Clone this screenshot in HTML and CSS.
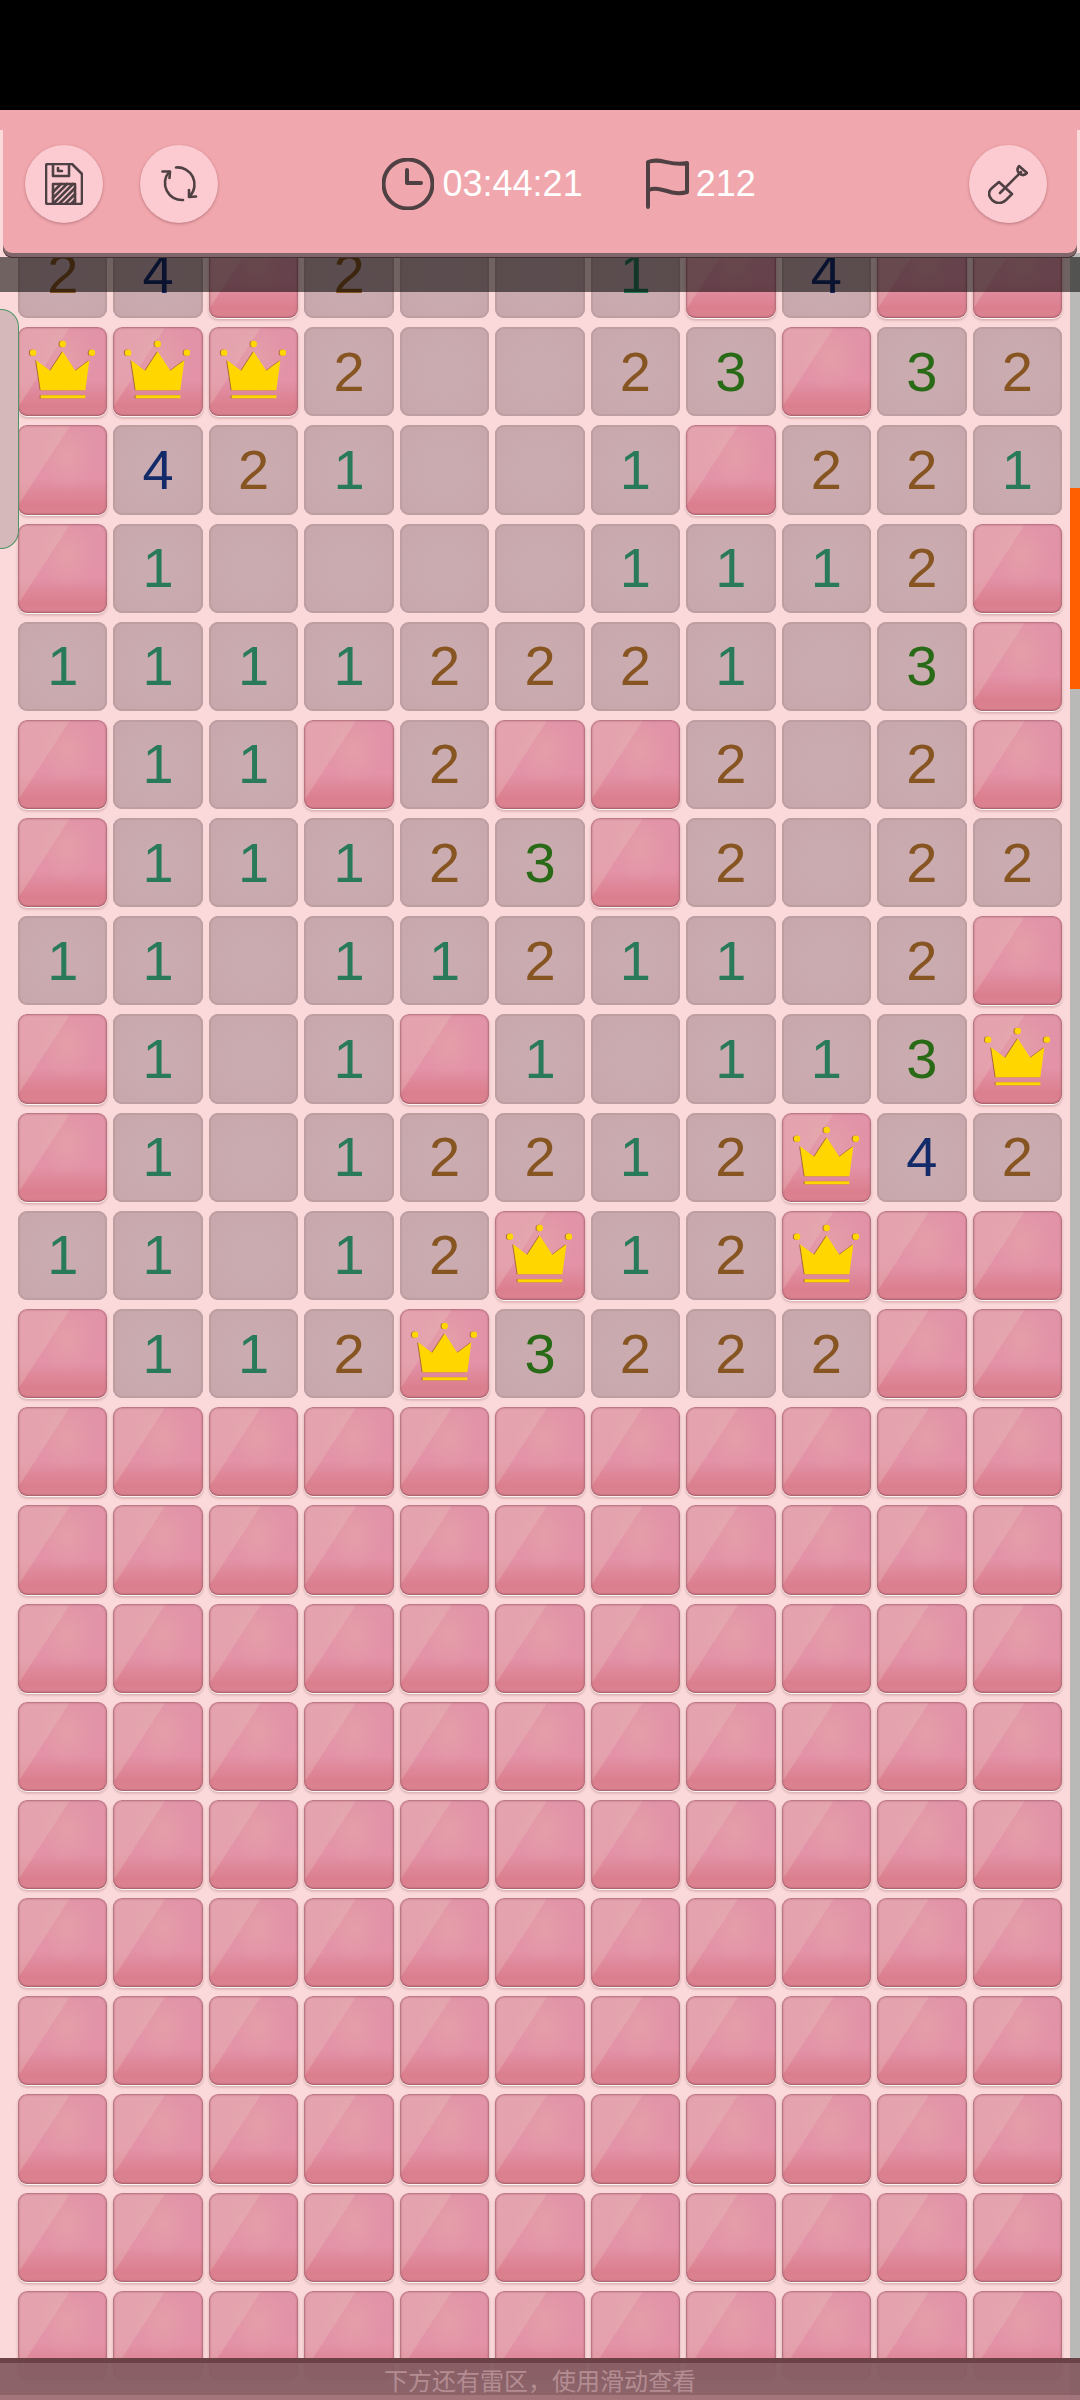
FILE: index.html
```
<!DOCTYPE html>
<html lang="zh">
<head>
    <meta charset="utf-8" />
    <meta name="viewport" content="width=device-width, initial-scale=1">
    <title>扫雷</title>
    <link rel="stylesheet" href="styles.css">
</head>
<body>
    <div class="status-bar"></div>
    <!-- 顶部工具栏 -->
    <header class="top">
        <div class="toolbar">
            <div class="tools">
                <button class="round" type="button" aria-label="保存">
                    <svg width="38" height="42" viewBox="0 0 38 42">
                        <path d="M3 1H27L37 11V39Q37 41 35 41H3Q1 41 1 39V3Q1 1 3 1Z"/>
                        <path d="M8 1V13H24V1M13 5V8H17"/>
                        <path d="M8 41V21H30V41"/>
                        <path d="M8 29L16 21M8 35L22 21M8 41L28 21M14 41L30 25M20 41L30 31M26 41L30 37"/>
                    </svg>
                </button>
                <button class="round" type="button" aria-label="重新开始">
                    <svg width="38" height="38" viewBox="0 0 38 38">
                        <path d="M16 2.5A17 17 0 0 1 30 31M23 35A17 17 0 0 1 9 7"/>
                        <path d="M2.5 6.5H10L9.5 13M29 25V32L36 31.5"/>
                    </svg>
                </button>
            </div>
            <div class="stat time">
                <svg width="52" height="52" viewBox="0 0 52 52">
                    <circle cx="26" cy="26" r="24.5"/>
                    <path d="M25 12V25H39"/>
                </svg>
                <span>03:44:21</span>
            </div>
            <div class="stat">
                <svg width="44" height="52" viewBox="0 0 44 52">
                    <path d="M3 49V4C16 -1 26 9 42 5V34C26 39 18 27 3 32"/>
                </svg>
                <span>212</span>
            </div>
            <button class="round dig" type="button" aria-label="挖开">
                <svg width="40" height="40" viewBox="0 0 40 40">
                    <path d="M11 18L24 30L18 36Q11 42 4 36Q-2 29 4 24ZM12 29L33 8M31 2L39 9Q35 13 31 9Q28 6 31 2Z"/>
                </svg>
            </button>
        </div>
    </header>

    <!-- 雷区 -->
    <main class="field">
        <div class="board" id="board"></div>
        <div class="track"><div class="thumb"></div></div>
        <div class="shade"></div>
        <div class="drawer"></div>
        <div class="tip">下方还有雷区，使用滑动查看</div>
    </main>

    <script type="text/javascript">
        // x 未翻开  * 皇冠标记  . 空白
        var rows = [
            '24x2..1x4xx',
            '***2..23x32',
            'x421..1x221',
            'x1....1112x',
            '11112221.3x',
            'x11x2xx2.2x',
            'x11123x2.22',
            '11.11211.2x',
            'x1.1x1.113*',
            'x1.12212*42',
            '11.12*12*xx',
            'x112*3222xx'
        ];
        while (rows.length < 22) {
            rows.push('xxxxxxxxxxx');
        }
        var crown = '<svg viewBox="0 0 89 89">' +
            '<path d="M18 33L32 43.5L44.5 24.5L57 43.5L71 33L67 63H22.5ZM22.5 68H67V71H22.5Z"/>' +
            '<circle cx="15" cy="25.5" r="3.2"/><circle cx="44.5" cy="17" r="3.2"/><circle cx="73.5" cy="25.5" r="3.2"/></svg>';
        var board = document.getElementById('board');
        rows.join('').split('').forEach(function(c){
            var cell = document.createElement('button');
            cell.type = 'button';
            if (c == 'x' || c == '*') {
                cell.className = 'cell';
                cell.setAttribute('aria-label', c == '*' ? '标记' : '未翻开');
                if (c == '*') cell.innerHTML = crown;
            } else {
                cell.className = 'cell open';
                if (c == '.') {
                    cell.setAttribute('aria-label', '空白');
                } else {
                    cell.className += ' n' + c;
                    cell.textContent = c;
                }
            }
            board.appendChild(cell);
        });
    </script>
</body>
</html>
```

FILE: styles.css
```
*{
    box-sizing: border-box;
}
body{
    margin: 0;
    height: 100vh;
    display: flex;
    flex-direction: column;
    overflow: hidden;
    background-color: #fbd9da;
    font-family: "Liberation Sans", Arial, "Noto Sans CJK SC", sans-serif;
}
button{
    border: 0;
    padding: 0;
    font-family: inherit;
    cursor: pointer;
}
.status-bar{
    flex: none;
    height: 110px;
    background-color: #000;
}
/* 顶部 */
.top{
    flex: none;
    position: relative;
    z-index: 2;
    padding: 0 3px;
    border-top: 20px solid #f0a7ad;
}
.toolbar{
    display: flex;
    align-items: center;
    height: 123px;
    padding: 0 30px 16px 22px;
    border-radius: 0 0 9px 9px;
    background-color: #f0a7ad;
    box-shadow: 0 4px 0 #80666a, 0 5px 0 #3f3032;
}
.tools{
    display: flex;
    gap: 37px;
    margin-right: 16%;
}
.round{
    display: flex;
    align-items: center;
    justify-content: center;
    width: 78px;
    height: 78px;
    border-radius: 50%;
    background-color: #fccad1;
    box-shadow: 0 1px 3px #b8767d;
}
.dig{
    margin-left: auto;
}
.toolbar svg{
    fill: none;
    stroke: #4f4143;
    stroke-width: 2.6;
    stroke-linecap: round;
    stroke-linejoin: round;
}
.stat{
    display: flex;
    align-items: center;
    gap: 9px;
    color: #fff;
    font-size: 36px;
    line-height: 54px;
}
.toolbar .stat svg{
    stroke-width: 4;
}
.time{
    margin-right: 62px;
}
.stat + .stat{
    gap: 7px;
}
/* 雷区 */
.field{
    flex: 1;
    min-height: 0;
    display: flex;
    position: relative;
}
.board{
    flex: 1;
    display: grid;
    grid-template-columns: repeat(11, minmax(0, 1fr));
    grid-template-rows: repeat(22, minmax(0, 1fr));
    gap: 9px 6px;
    margin-top: -24px;
    padding: 0 8px 20px 18px;
}
.cell{
    border-radius: 9px;
    background:
        linear-gradient(123deg, rgba(232,190,185,.36) 35%, transparent 36%),
        radial-gradient(ellipse at 55% 34%, rgba(229,160,168,.9), rgba(229,155,168,0) 42%),
        linear-gradient(#e193a8, #e392a8 60%, #db7f8e 88%, #dc8290);
    box-shadow: inset 0 0 2px 1px #b06b78, inset 0 -1px 1px #a4545f, 0 1px 1px #fff, 0 2px 3px #c9989b;
}
.cell svg{
    display: block;
    width: 100%;
    fill: #ffd600;
    filter: drop-shadow(-1px 0 0 #a8693c);
}
.open{
    background: radial-gradient(#cbacb0, #c7a7ac);
    box-shadow: inset 0 0 0 2px #bd9fa2;
    font-size: 56px;
    line-height: 88px;
}
.n1{ color: #287a5a; }
.n2{ color: #875522; }
.n3{ color: #296a17; }
.n4{ color: #142b69; }
/* 滚动条 */
.track{
    width: 10px;
    padding-top: 235px;
    background-color: #b9bab7;
}
.thumb{
    height: 201px;
    background-color: #ff5f00;
}
/* 上下遮罩 */
.shade{
    position: absolute;
    top: 4px;
    left: 0;
    right: 0;
    height: 35px;
    background-color: rgba(0,0,0,.55);
}
.drawer{
    position: absolute;
    top: 56px;
    left: 0;
    width: 19px;
    height: 240px;
    border: 1px solid #4c9465;
    border-left: 0;
    border-radius: 0 18px 18px 0;
    background-color: #d5b8ba;
}
.tip{
    position: absolute;
    left: 0;
    right: 0;
    bottom: 0;
    height: 42px;
    border-top: 5px solid #6b4347;
    border-bottom: 5px solid rgba(160,112,119,.95);
    background-color: rgba(134,94,100,.96);
    background-clip: padding-box;
    color: #b48d93;
    font-size: 24px;
    line-height: 38px;
    text-align: center;
}
```
